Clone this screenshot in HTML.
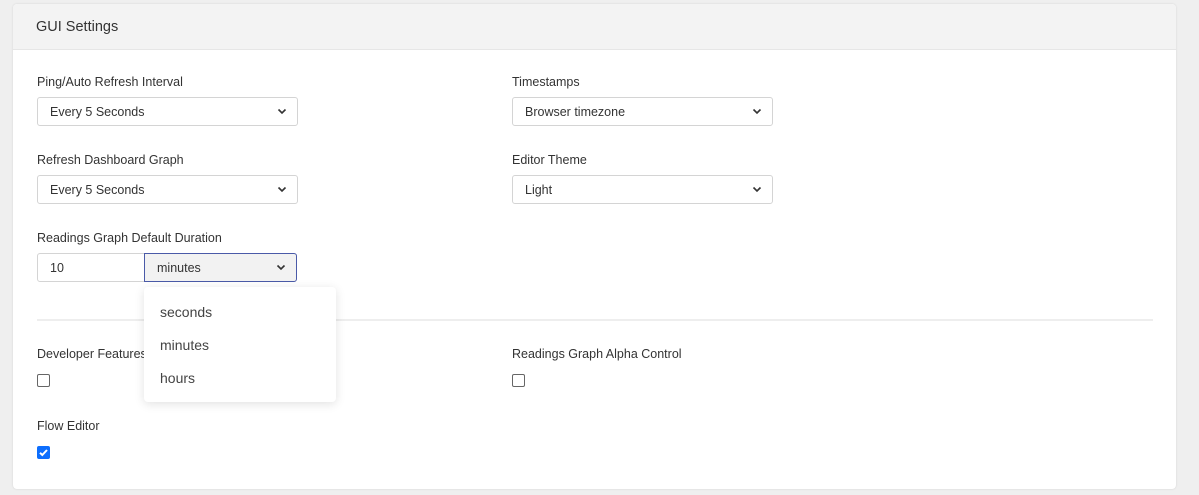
<!DOCTYPE html>
<html><head><style>
body{margin:0;width:1199px;height:495px;background:#efefef;font-family:"Liberation Sans",sans-serif;color:#333;position:relative;overflow:hidden}
.card{position:absolute;left:13px;top:4px;width:1163px;height:485px;background:#fff;border-radius:4px;box-shadow:0 0 2px rgba(0,0,0,.12)}
.hdr{position:absolute;left:0;top:0;width:100%;height:45px;background:#f3f3f3;border-bottom:1px solid #e6e6e6;border-radius:4px 4px 0 0}
.hdr span{position:absolute;left:23px;top:15px;font-size:14.5px;color:#333}
.lbl{position:absolute;font-size:12.5px;color:#333}
.sel{position:absolute;height:29px;border:1px solid #d4d4d4;border-radius:3px;background:#fff;font-size:12.5px;box-sizing:border-box;padding:7px 12px;color:#333}
.sel svg{position:absolute;right:10px;top:10px}
.cb{position:absolute;width:11px;height:11px;border:1px solid #666;border-radius:2px;background:#fff}
.dd{position:absolute;left:144px;top:287px;width:192px;height:115px;background:#fff;border-radius:4px;box-shadow:0 2px 10px rgba(0,0,0,.12)}
.dd div{position:absolute;left:16px;font-size:14px;color:#444}
</style></head><body>
<div class="card"><div class="hdr"><span>GUI Settings</span></div></div>
<div class="lbl" style="left:37px;top:75px">Ping/Auto Refresh Interval</div>
<div class="sel" style="left:37px;top:97px;width:261px">Every 5 Seconds<svg width="10" height="7" viewBox="0 0 10 7"><path d="M1.5 1.5L5 5L8.5 1.5" stroke="#333" stroke-width="1.6" fill="none"/></svg></div>
<div class="lbl" style="left:512px;top:75px">Timestamps</div>
<div class="sel" style="left:512px;top:97px;width:261px">Browser timezone<svg width="10" height="7" viewBox="0 0 10 7"><path d="M1.5 1.5L5 5L8.5 1.5" stroke="#333" stroke-width="1.6" fill="none"/></svg></div>
<div class="lbl" style="left:37px;top:153px">Refresh Dashboard Graph</div>
<div class="sel" style="left:37px;top:175px;width:261px">Every 5 Seconds<svg width="10" height="7" viewBox="0 0 10 7"><path d="M1.5 1.5L5 5L8.5 1.5" stroke="#333" stroke-width="1.6" fill="none"/></svg></div>
<div class="lbl" style="left:512px;top:153px">Editor Theme</div>
<div class="sel" style="left:512px;top:175px;width:261px">Light<svg width="10" height="7" viewBox="0 0 10 7"><path d="M1.5 1.5L5 5L8.5 1.5" stroke="#333" stroke-width="1.6" fill="none"/></svg></div>
<div class="lbl" style="left:37px;top:231px">Readings Graph Default Duration</div>
<div class="sel" style="left:37px;top:253px;width:110px;border-radius:3px 0 0 3px">10</div>
<div class="sel" style="left:144px;top:253px;width:153px;background:#f2f2f2;border-color:#4a5aa8;border-radius:0 3px 3px 0">minutes<svg width="10" height="7" viewBox="0 0 10 7"><path d="M1.5 1.5L5 5L8.5 1.5" stroke="#333" stroke-width="1.6" fill="none"/></svg></div>
<div style="position:absolute;left:37px;top:319px;width:1116px;height:2px;background:#eee"></div>
<div class="lbl" style="left:37px;top:347px">Developer Features</div>
<div class="cb" style="left:37px;top:374px"></div>
<div class="lbl" style="left:512px;top:347px">Readings Graph Alpha Control</div>
<div class="cb" style="left:512px;top:374px"></div>
<div class="lbl" style="left:37px;top:419px">Flow Editor</div>
<div style="position:absolute;left:37px;top:446px;width:13px;height:13px;background:#0d6efd;border-radius:2px"><svg width="13" height="13" viewBox="0 0 13 13"><path d="M3 6.8L5.3 9L10 4" stroke="#fff" stroke-width="2" fill="none"/></svg></div>
<div class="dd"><div style="top:17px">seconds</div><div style="top:50px">minutes</div><div style="top:83px">hours</div></div>
</body></html>
